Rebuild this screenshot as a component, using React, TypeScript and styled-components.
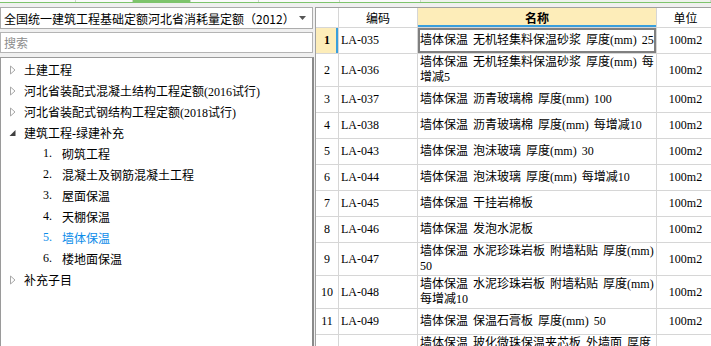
import React from 'react';
import styled, {createGlobalStyle} from 'styled-components';

const GlobalStyle = createGlobalStyle`
    html, body {
        margin: 0;
        padding: 0;
    }
    body {
        font-family: "Liberation Serif", "Noto Sans CJK SC", sans-serif;
        font-size: 12px;
        color: #000;
        overflow: hidden;
    }
`;

const Screen = styled.div`
    width: 711px;
    height: 346px;
    background: #f0f0f0;
    display: flex;
    flex-direction: column;
    overflow: hidden;
`;

const TabStrip = styled.div`
    display: flex;
    height: 2px;
    border-bottom: 1px solid #7ec46d;
    background: #fbfbfb;
`;

const TabSeg = styled.div<{$w?: number; $active?: boolean}>`
    width: ${(p) => (p.$w ? `${p.$w}px` : 'auto')};
    flex: ${(p) => (p.$w ? 'none' : '1')};
    background: ${(p) => (p.$active ? '#7ec46d' : p.$w ? '#fbfbfb' : '#eef3ec')};
    border-right: 1px solid #cdd6ca;
`;

const Main = styled.div`
    flex: 1;
    min-height: 0;
    display: flex;
    margin-top: 4px;
`;

const LeftPanel = styled.div`
    width: 314px;
    display: flex;
    flex-direction: column;
`;

const Dropdown = styled.div`
    width: 313px;
    height: 22px;
    box-sizing: border-box;
    border: 1px solid #acacac;
    background: #fff;
    display: flex;
    align-items: center;
    justify-content: space-between;
    padding: 0 6px 0 3px;
    font-family: "Noto Sans CJK SC", sans-serif;
    white-space: nowrap;
`;

const SearchBox = styled.div`
    width: 313px;
    height: 21px;
    margin-top: 3px;
    box-sizing: border-box;
    border: 1px solid #b4b4b4;
    background: #fff;
    display: flex;
    align-items: center;
    padding-left: 3px;
    color: #8c8c8c;
    font-family: "Noto Sans CJK SC", sans-serif;
`;

const TreeBox = styled.div`
    flex: 1;
    margin-top: 4px;
    background: #fff;
    border-top: 1px solid #9a9a9a;
    border-left: 1px solid #9a9a9a;
    border-right: 2px solid #8a8a8a;
    padding-top: 1px;
`;

const TreeRow = styled.div<{$indent: number; $selected?: boolean}>`
    height: 21px;
    display: flex;
    align-items: center;
    padding-left: ${(p) => p.$indent}px;
    color: ${(p) => (p.$selected ? '#0c8ce9' : '#000')};
    white-space: nowrap;
`;

const Arrow = styled.span`
    width: 15px;
    display: flex;
    align-items: center;
`;

const ItemNo = styled.span`
    width: 19px;
`;

const RightPanel = styled.div`
    flex: 1;
    margin-left: 1px;
    background: #fff;
    border-top: 1px solid #a0a0a0;
    border-left: 1px solid #a0a0a0;
    overflow: hidden;
`;

const columns = '23px 79px 239px 58px';

const HeaderRow = styled.div`
    display: grid;
    grid-template-columns: ${columns};
    height: 20px;
    box-sizing: border-box;
    border-bottom: 1px solid #d6d6d6;
    font-family: "Noto Sans CJK SC", sans-serif;
`;

const HeaderCell = styled.div<{$active?: boolean}>`
    display: flex;
    align-items: center;
    justify-content: center;
    border-right: 1px solid #d6d6d6;
    background: ${(p) => (p.$active ? '#fdedb9' : '#fff')};
    font-weight: ${(p) => (p.$active ? 700 : 400)};
    box-shadow: ${(p) => (p.$active ? 'inset 0 -2px 0 #3a9fdc' : 'none')};
`;

const Row = styled.div<{$tall: boolean}>`
    display: grid;
    grid-template-columns: ${columns};
    height: ${(p) => (p.$tall ? 33 : 26)}px;
    box-sizing: border-box;
    border-bottom: 1px solid #d6d6d6;
`;

const Cell = styled.div`
    display: flex;
    align-items: center;
    border-right: 1px solid #d6d6d6;
    overflow: hidden;
    white-space: nowrap;
`;

const NumCell = styled(Cell)<{$current: boolean}>`
    justify-content: center;
    background: ${(p) => (p.$current ? '#fdedb9' : '#fff')};
    font-weight: ${(p) => (p.$current ? 700 : 400)};
    box-shadow: ${(p) => (p.$current ? 'inset -2px 0 0 #3a9fdc' : 'none')};
`;

const CodeCell = styled(Cell)`
    padding-left: 2px;
`;

const NameCell = styled(Cell)<{$current: boolean}>`
    flex-direction: column;
    align-items: flex-start;
    justify-content: center;
    padding-left: 2px;
    line-height: 15px;
    word-spacing: 2px;
    box-shadow: ${(p) => (p.$current ? 'inset 0 0 0 2px #808080' : 'none')};
`;

const UnitCell = styled(Cell)`
    justify-content: center;
`;

const CollapsedIcon = () => (
    <svg width="8" height="10" viewBox="0 0 8 10">
        <path d="M1.5 1 L6 5 L1.5 9 Z" fill="none" stroke="#a8a8a8" strokeWidth="1" />
    </svg>
);

const ExpandedIcon = () => (
    <svg width="8" height="8" viewBox="0 0 8 8">
        <path d="M6.5 1 L6.5 7 L0.5 7 Z" fill="#404040" />
    </svg>
);

const topItems = ['土建工程', '河北省装配式混凝土结构工程定额(2016试行)', '河北省装配式钢结构工程定额(2018试行)'];
const children = ['砌筑工程', '混凝土及钢筋混凝土工程', '屋面保温', '天棚保温', '墙体保温', '楼地面保温'];

const rows: {code: string; name: string[]}[] = [
    {code: 'LA-035', name: ['墙体保温 无机轻集料保温砂浆 厚度(mm) 25']},
    {code: 'LA-036', name: ['墙体保温 无机轻集料保温砂浆 厚度(mm) 每', '增减5']},
    {code: 'LA-037', name: ['墙体保温 沥青玻璃棉 厚度(mm) 100']},
    {code: 'LA-038', name: ['墙体保温 沥青玻璃棉 厚度(mm) 每增减10']},
    {code: 'LA-043', name: ['墙体保温 泡沫玻璃 厚度(mm) 30']},
    {code: 'LA-044', name: ['墙体保温 泡沫玻璃 厚度(mm) 每增减10']},
    {code: 'LA-045', name: ['墙体保温 干挂岩棉板']},
    {code: 'LA-046', name: ['墙体保温 发泡水泥板']},
    {code: 'LA-047', name: ['墙体保温 水泥珍珠岩板 附墙粘贴 厚度(mm)', '50']},
    {code: 'LA-048', name: ['墙体保温 水泥珍珠岩板 附墙粘贴 厚度(mm)', '每增减10']},
    {code: 'LA-049', name: ['墙体保温 保温石膏板 厚度(mm) 50']},
    {code: 'LA-050', name: ['墙体保温 玻化微珠保温夹芯板 外墙面 厚度', '(mm) 50']},
];

export default function App(): JSX.Element {
    return (
        <Screen>
            <GlobalStyle />
            <TabStrip>
                <TabSeg $w={75} />
                <TabSeg $w={56} />
                <TabSeg $w={57} $active />
                <TabSeg $w={67} />
                <TabSeg $w={80} />
                <TabSeg $w={80} />
                <TabSeg />
            </TabStrip>
            <Main>
                <LeftPanel>
                    <Dropdown>
                        <span>全国统一建筑工程基础定额河北省消耗量定额（2012）</span>
                        <svg width="7" height="4" viewBox="0 0 7 4">
                            <path d="M0 0 H7 L3.5 4 Z" fill="#555" />
                        </svg>
                    </Dropdown>
                    <SearchBox>搜索</SearchBox>
                    <TreeBox>
                        {topItems.map((t) => (
                            <TreeRow key={t} $indent={8}>
                                <Arrow>
                                    <CollapsedIcon />
                                </Arrow>
                                {t}
                            </TreeRow>
                        ))}
                        <TreeRow $indent={8}>
                            <Arrow>
                                <ExpandedIcon />
                            </Arrow>
                            建筑工程-绿建补充
                        </TreeRow>
                        {children.map((c, i) => (
                            <TreeRow key={c} $indent={42} $selected={i === 4}>
                                <ItemNo>{i + 1}.</ItemNo>
                                {c}
                            </TreeRow>
                        ))}
                        <TreeRow $indent={8}>
                            <Arrow>
                                <CollapsedIcon />
                            </Arrow>
                            补充子目
                        </TreeRow>
                    </TreeBox>
                </LeftPanel>
                <RightPanel>
                    <HeaderRow>
                        <HeaderCell />
                        <HeaderCell>编码</HeaderCell>
                        <HeaderCell $active>名称</HeaderCell>
                        <HeaderCell>单位</HeaderCell>
                    </HeaderRow>
                    {rows.map((r, i) => (
                        <Row key={r.code} $tall={r.name.length > 1}>
                            <NumCell $current={i === 0}>{i + 1}</NumCell>
                            <CodeCell>{r.code}</CodeCell>
                            <NameCell $current={i === 0}>
                                {r.name.map((line) => (
                                    <span key={line}>{line}</span>
                                ))}
                            </NameCell>
                            <UnitCell>100m2</UnitCell>
                        </Row>
                    ))}
                </RightPanel>
            </Main>
        </Screen>
    );
}
